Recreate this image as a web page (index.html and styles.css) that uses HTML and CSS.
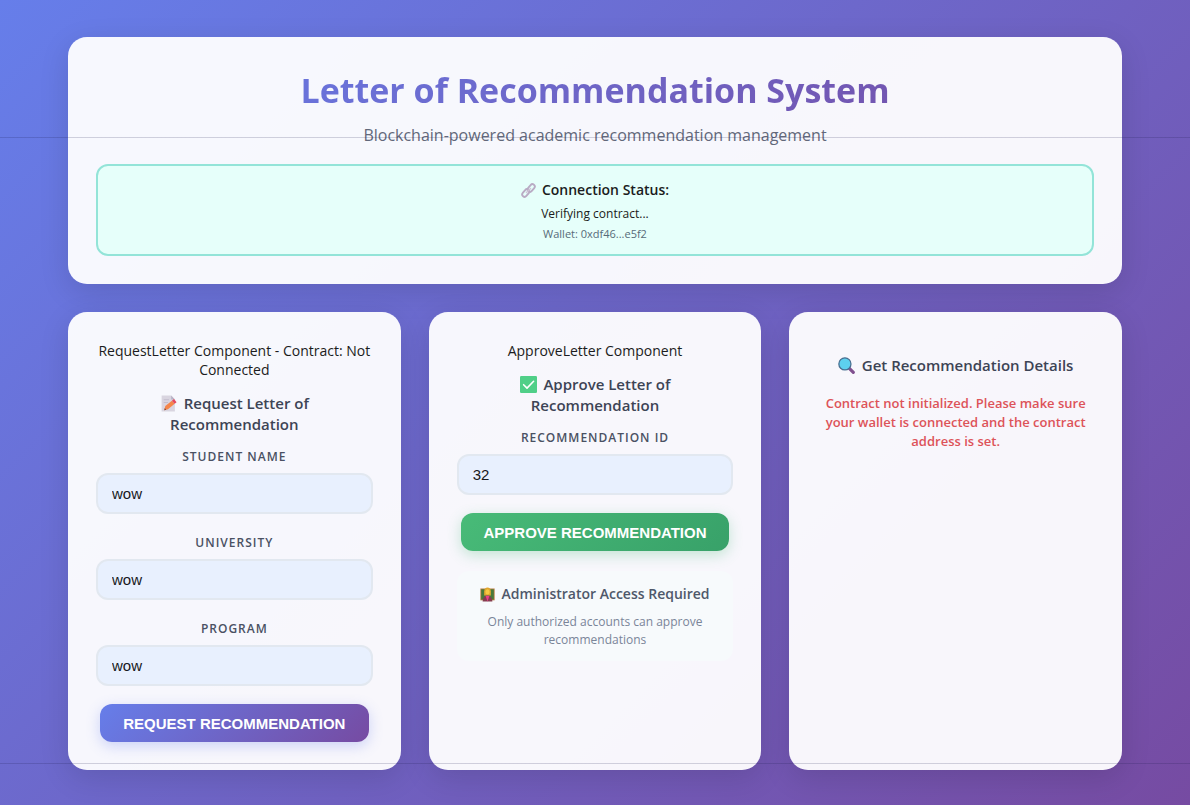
FILE: index.html
```html
<!DOCTYPE html>
<html lang="en">
<head>
<meta charset="utf-8">
<meta name="viewport" content="width=device-width, initial-scale=1">
<title>Letter of Recommendation System</title>
<link rel="stylesheet" href="styles.css">
</head>
<body>
<div class="app">
  <header class="panel header">
    <h1 class="title">Letter of Recommendation System</h1>
    <p class="subtitle">Blockchain-powered academic recommendation management</p>
    <section class="status">
      <p class="status-title">
        <svg class="icon icon-small" viewBox="0 0 16 16" aria-hidden="true">
          <g fill="none" stroke="#b9abc4" stroke-width="2">
            <rect x="6.4" y="2.8" width="9" height="5" rx="2.5" transform="rotate(-50 10.9 5.3)"/>
            <rect x="0.6" y="8.2" width="9" height="5" rx="2.5" transform="rotate(-50 5.1 10.7)"/>
          </g>
          <path d="M5.8 10.2 10.2 5.8" stroke="#cfc4d6" stroke-width="1.5" stroke-linecap="round"/>
        </svg>
        <span>Connection Status:</span>
      </p>
      <p class="status-text">Verifying contract...</p>
      <p class="status-wallet">Wallet: 0xdf46...e5f2</p>
    </section>
  </header>

  <main class="grid">
    <section class="panel card">
      <p class="component-note">RequestLetter Component - Contract: Not Connected</p>
      <h2 class="card-title">
        <svg class="icon" viewBox="0 0 16 16" aria-hidden="true">
          <path d="M1.5.5h9l3.5 3.8v11.2H1.5z" fill="#d9d5e0"/>
          <path d="M10.5.5v3.8H14z" fill="#b8b1c4"/>
          <path d="M3.5 4.5h5M3.5 7h4" stroke="#c3bdcd" stroke-width="1"/>
          <path d="m4 14.3 1-4 6.2-5 2.6 3-6.3 5.1z" fill="#f5854a"/>
          <path d="m11.2 5.3 2-1.5 2.4 3-1.8 1.5z" fill="#e5485f"/>
          <path d="m4 14.3.5-2 1.4 1.5z" fill="#7c4a3e"/>
        </svg>
        Request Letter of Recommendation
      </h2>
      <form class="form">
        <label class="label" for="student">Student Name</label>
        <input class="input" id="student" type="text" value="wow">
        <label class="label" for="university">University</label>
        <input class="input" id="university" type="text" value="wow">
        <label class="label" for="program">Program</label>
        <input class="input" id="program" type="text" value="wow">
        <button class="button button-request" type="button">Request Recommendation</button>
      </form>
    </section>

    <section class="panel card">
      <p class="component-note">ApproveLetter Component</p>
      <h2 class="card-title">
        <svg class="icon" viewBox="0 0 16 16" aria-hidden="true">
          <rect width="16" height="16" rx="1.2" fill="#50cf88"/>
          <path d="m3.4 8.2 3.2 3.2 6.2-6.4" fill="none" stroke="#fff" stroke-width="1.5" stroke-linecap="round" stroke-linejoin="round"/>
        </svg>
        Approve Letter of Recommendation
      </h2>
      <form class="form">
        <label class="label" for="rec-id">Recommendation ID</label>
        <input class="input" id="rec-id" type="text" inputmode="numeric" value="32">
        <button class="button button-approve" type="button">Approve Recommendation</button>
      </form>
      <div class="admin">
        <p class="admin-title">
          <svg class="icon icon-small" viewBox="0 0 16 16" aria-hidden="true">
            <rect x=".4" y="1.6" width="15.2" height="12.6" fill="#b97a3c"/>
            <rect x="1.3" y="2.5" width="13.4" height="10.8" fill="#477b3d"/>
            <path d="M4.4 9V4.6C4.4 2 6 .6 8 .6s3.6 1.4 3.6 4V9z" fill="#dfa52d"/>
            <ellipse cx="8" cy="5.2" rx="2.3" ry="2.8" fill="#f7c943"/>
            <path d="M2.8 15.4c0-4 1.8-6 5.2-6s5.2 2 5.2 6z" fill="#853e50"/>
            <path d="M5.9 9.4 8 15.4l2.1-6z" fill="#ee3d88"/>
          </svg>
          <span>Administrator Access Required</span>
        </p>
        <p class="admin-text">Only authorized accounts can approve recommendations</p>
      </div>
    </section>

    <section class="panel card">
      <h2 class="card-title card-title-solo">
        <svg class="icon" viewBox="0 0 16 16" aria-hidden="true">
          <path d="m10.4 10.4 4 4" stroke="#80508f" stroke-width="3" stroke-linecap="round"/>
          <circle cx="6.5" cy="6.5" r="5.7" fill="#5dd0ee" stroke="#496f91" stroke-width="1.2"/>
        </svg>
        Get Recommendation Details
      </h2>
      <p class="error">Contract not initialized. Please make sure your wallet is connected and the contract address is set.</p>
    </section>
  </main>
</div>
</body>
</html>
```
FILE: styles.css
```css
*,
*::before,
*::after {
  box-sizing: border-box;
}

body {
  position: relative;
  margin: 0;
  min-height: 100vh;
  background: linear-gradient(135deg, #667eea 0%, #764ba2 100%);
  font-family: "Open Sans", "Noto Sans", sans-serif;
  text-align: center;
  color: #1b1c20;
}

/* Faint horizontal hairlines drawn over the whole page */
body::after {
  content: "";
  position: absolute;
  inset: 0;
  pointer-events: none;
  background: linear-gradient(transparent 625px, rgba(20, 20, 70, 0.18) 625px) 0 138px / 100% 626px;
}

h1,
h2,
p {
  margin: 0;
}

.app {
  display: flex;
  flex-direction: column;
  gap: 28px;
  min-height: 100vh;
  padding: 37px 68px 35px;
}

.panel {
  padding: 28px;
  border-radius: 19px;
  background: rgba(255, 255, 255, 0.95);
  box-shadow: 0 8px 30px rgba(0, 0, 0, 0.12);
}

.title {
  background: linear-gradient(135deg, #667eea, #764ba2);
  background-clip: text;
  -webkit-background-clip: text;
  color: transparent;
  font-size: 34px;
  font-weight: 700;
  line-height: 50px;
}

.subtitle {
  margin-top: 8px;
  color: #62687a;
  font-size: 16px;
  line-height: 24px;
}

.status {
  margin-top: 17px;
  padding: 14px 12px 12px;
  border: 2px solid #93e4d8;
  border-radius: 12px;
  background: #e6fffa;
}

.status-title,
.admin-title {
  display: flex;
  align-items: center;
  justify-content: center;
  gap: 6px;
  font-size: 14px;
  font-weight: 600;
}

.status-title {
  line-height: 20px;
}

.status-text {
  margin-top: 4px;
  font-size: 12px;
  line-height: 19px;
}

.status-wallet {
  margin-top: 2px;
  color: #566b79;
  font-size: 11px;
  line-height: 17px;
}

.icon {
  width: 17px;
  height: 17px;
  margin-right: 3px;
  vertical-align: -3px;
}

.icon-small {
  width: 15px;
  height: 15px;
  margin: 0;
}

.grid {
  display: grid;
  flex: 1;
  grid-template-columns: repeat(3, minmax(0, 1fr));
  gap: 28px;
}

.card {
  padding-top: 29px;
}

.component-note {
  font-size: 14px;
  line-height: 19px;
}

.card-title {
  margin: 14px 0 13px;
  color: #3d4455;
  font-size: 15px;
  font-weight: 600;
  line-height: 21px;
}

.card-title-solo {
  margin-bottom: 18px;
}

.form {
  display: flex;
  flex-direction: column;
}

.label {
  margin-bottom: 8px;
  color: #4a5163;
  font-size: 12px;
  font-weight: 600;
  letter-spacing: 1px;
  line-height: 17px;
  text-transform: uppercase;
}

.input {
  width: 100%;
  height: 41px;
  margin-bottom: 20px;
  padding: 0 14px;
  border: 2px solid #e2e8f0;
  border-radius: 12px;
  background: #e8f0fe;
  color: #17181c;
  font-family: "Liberation Sans", Arial, sans-serif;
  font-size: 15px;
}

.button {
  height: 38px;
  margin: -2px 4px 0;
  border: 0;
  border-radius: 12px;
  color: #fff;
  font-family: "Liberation Sans", Arial, sans-serif;
  font-size: 15px;
  font-weight: 700;
  text-transform: uppercase;
}

.button-request {
  background: linear-gradient(135deg, #667eea, #764ba2);
  box-shadow: 0 4px 14px rgba(102, 126, 234, 0.3);
}

.button-approve {
  background: linear-gradient(135deg, #48bb78, #38a169);
  box-shadow: 0 4px 14px rgba(72, 187, 120, 0.3);
}

.admin {
  margin-top: 20px;
  padding: 14px 14px 12px;
  border-radius: 12px;
  background: #f7fafc;
}

.admin-title {
  color: #4f586a;
  line-height: 18px;
}

.admin-text {
  margin-top: 10px;
  color: #7a8599;
  font-size: 12px;
  line-height: 18px;
}

.error {
  color: #dd5359;
  font-size: 13px;
  font-weight: 600;
  line-height: 19px;
}

@media (max-width: 900px) {
  .app {
    padding: 24px;
  }

  .grid {
    grid-template-columns: minmax(0, 1fr);
  }
}
```
